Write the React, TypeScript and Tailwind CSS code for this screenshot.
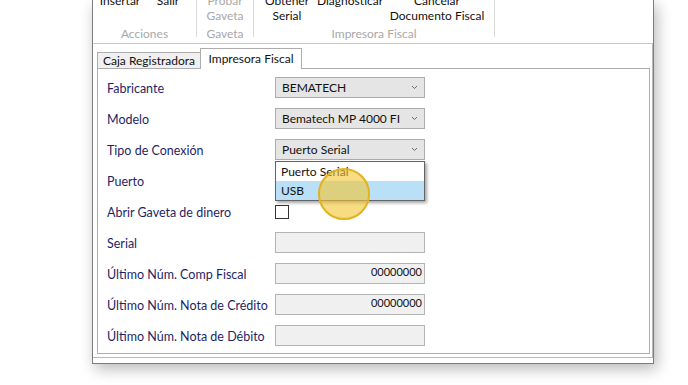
import React from "react";

const font = { fontFamily: "Lato, 'Liberation Sans', sans-serif" };

function Chevron() {
  return (
    <svg width="7" height="5" viewBox="0 0 7 5" className="shrink-0">
      <path d="M1 1 L3.5 3.5 L6 1" fill="none" stroke="#6a6a6a" strokeWidth="1" />
    </svg>
  );
}

function Combo({ value }: { value: string }) {
  return (
    <div className="w-[150px] h-[21px] border border-[#acacac] bg-[#e5e5e5] flex items-center pl-[6px] pr-[6px] justify-between">
      <span className="text-[12px] text-[#111] leading-none mt-[1px]">{value}</span>
      <Chevron />
    </div>
  );
}

function TextBox({ value }: { value?: string }) {
  return (
    <div className="w-[150px] h-[21px] border border-[#b4b4b4] bg-[#f0f0f0] text-right px-[2px] text-[11px] leading-[16px] text-[#111]">
      {value ?? ""}
    </div>
  );
}

function Row({ label, children }: { label: string; children?: React.ReactNode }) {
  return (
    <div className="flex items-center h-[21px]">
      <div className="w-[168px] text-[12.5px] leading-[16px] mt-[2px] text-[#1f1f66]">{label}</div>
      {children}
    </div>
  );
}

function RibbonButton({ lines, w, disabled }: { lines: string[]; w: string; disabled?: boolean }) {
  return (
    <div className={`${w} flex flex-col items-center text-[12px] leading-[15px] ${disabled ? "text-[#a8a8a8]" : "text-[#111]"}`}>
      {lines.map((l, i) => (
        <span key={i} className="whitespace-nowrap">{l}</span>
      ))}
    </div>
  );
}

export default function App() {
  return (
    <div className="w-[688px] h-[385px] bg-white overflow-hidden" style={font}>
      <div className="ml-[92px] w-[562px] h-[364px] border-x border-b border-[#7d7d7d] bg-white shadow-[3px_5px_14px_rgba(0,0,0,0.28)] flex flex-col">
        {/* Ribbon */}
        <div className="h-[44px] border-b border-[#c8c8c8] flex shrink-0">
          {/* Acciones */}
          <div className="w-[103px] flex flex-col">
            <div className="flex mt-[-7px] pl-[2px] h-[30px]">
              <RibbonButton lines={["Insertar", ""]} w="w-[50px]" />
              <RibbonButton lines={["Salir", ""]} w="w-[46px]" />
            </div>
            <div className="mt-[3px] text-center text-[12px] leading-[15px] text-[#a8a8a8]">Acciones</div>
          </div>
          <div className="w-px h-[37px] bg-[#dadada]" />
          {/* Gaveta */}
          <div className="w-[56px] flex flex-col">
            <div className="flex mt-[-7px] h-[30px]">
              <RibbonButton lines={["Probar", "Gaveta"]} w="w-[56px]" disabled />
            </div>
            <div className="mt-[3px] text-center text-[12px] leading-[15px] text-[#a8a8a8]">Gaveta</div>
          </div>
          <div className="w-px h-[37px] bg-[#dadada]" />
          {/* Impresora Fiscal */}
          <div className="w-[240px] flex flex-col">
            <div className="flex mt-[-7px] h-[30px]">
              <RibbonButton lines={["Obtener", "Serial"]} w="w-[66px]" />
              <RibbonButton lines={["Diagnosticar", ""]} w="w-[60px]" />
              <RibbonButton lines={["Cancelar", "Documento Fiscal"]} w="w-[114px]" />
            </div>
            <div className="mt-[3px] text-center text-[12px] leading-[15px] text-[#a8a8a8]">Impresora Fiscal</div>
          </div>
          <div className="w-px h-[37px] bg-[#dadada]" />
        </div>

        {/* Client area */}
        <div className="h-[314px] border-r border-b border-[#b9b9b9] pl-[4px] pr-[2px] pb-[3px] flex flex-col shrink-0">
          {/* Tab strip */}
          <div className="h-[24px] flex items-end shrink-0">
            <div className="w-[103px] h-[16px] border-t border-l border-[#adadad] bg-[#f0f0f0] text-[12px] leading-[15px] text-[#111] text-center">
              Caja Registradora
            </div>
            <div className="relative z-10 w-[102px] h-[21px] mb-[-1px] border-t border-x border-[#adadad] bg-white text-[12px] leading-[19px] text-[#111] text-center">
              Impresora Fiscal
            </div>
          </div>
          {/* Panel */}
          <div className="relative h-[286px] border border-[#adadad] bg-white pl-[9px] pt-[8px] flex flex-col gap-[10px]">
            <Row label="Fabricante"><Combo value="BEMATECH" /></Row>
            <Row label="Modelo"><Combo value="Bematech MP 4000 FI" /></Row>
            <Row label="Tipo de Conexión"><Combo value="Puerto Serial" /></Row>
            <Row label="Puerto" />
            <Row label="Abrir Gaveta de dinero">
              <div className="w-[14px] h-[14px] border border-[#333] bg-white" />
            </Row>
            <Row label="Serial"><TextBox /></Row>
            <Row label="Último Núm. Comp Fiscal"><TextBox value="00000000" /></Row>
            <Row label="Último Núm. Nota de Crédito"><TextBox value="00000000" /></Row>
            <Row label="Último Núm. Nota de Débito"><TextBox /></Row>

            {/* Dropdown list */}
            <div className="absolute left-[177px] top-[92px] w-[150px] h-[40px] border border-[#646464] bg-white shadow-[2px_2px_3px_rgba(0,0,0,0.35)] flex flex-col">
              <div className="h-[19px] pl-[5px] text-[12px] leading-[19px] text-[#111]">Puerto Serial</div>
              <div className="h-[19px] pl-[5px] text-[12px] leading-[19px] text-[#111] bg-[#b9e0f6]">USB</div>
            </div>

            {/* Cursor highlight */}
            <div className="absolute left-[220px] top-[99px] w-[52px] h-[52px] rounded-full border-2 border-[#e2b21f] bg-[rgba(244,196,48,0.6)]" />
          </div>
        </div>
      </div>
    </div>
  );
}
